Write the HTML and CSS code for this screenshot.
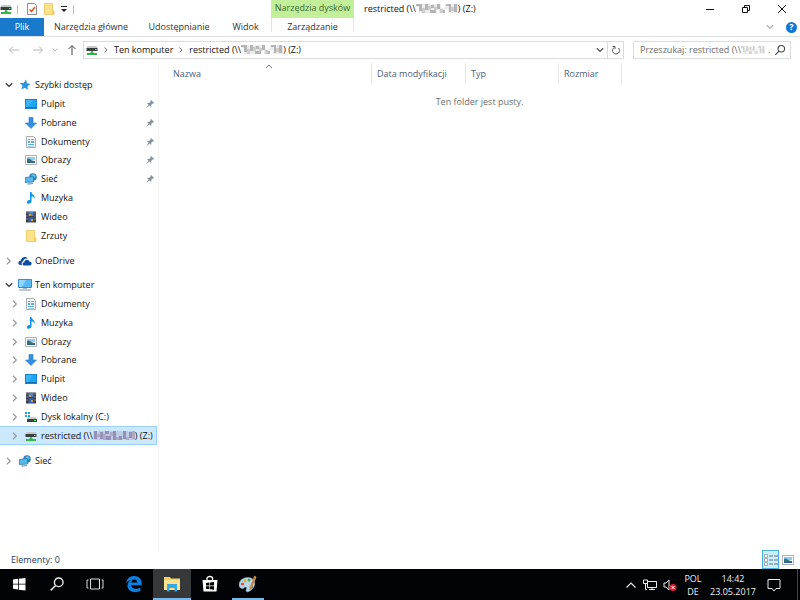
FILE: index.html
```
<!DOCTYPE html>
<html lang="pl">
<head>
<meta charset="utf-8">
<title>restricted (Z:)</title>
<link rel="stylesheet" href="styles.css">
</head>
<body>
<svg class="defs" aria-hidden="true">
  <symbol id="netdrive" viewBox="0 0 12 12"><path d="M1.5 2h9l1 2H.5z" fill="#c4c8c8"/><path d="M.5 4h11v3H.5z" fill="#384040"/><path d="M9 5h1.5v1H9z" fill="#5f6"/><path d="M5 7h2v2H5z" fill="#58b860"/><path d="M1 9h3l1-1h2l1 1h3v2H1z" fill="#35b44a"/></symbol>
  <symbol id="star" viewBox="0 0 12 12"><path d="M7 .5l1 3.8 3.500.8-3 2.100.3 3.800-3-2.200-3.500 1.700 1.200-3.700L.8 4.100l3.800-.2z" fill="#2b94e0"/></symbol>
  <symbol id="desktop" viewBox="0 0 12 12"><path d="M0 1h12v10H0z" fill="#1783cb"/><path d="M1 2h10v7H1z" fill="#1fa5f5"/><path d="M1 2h7L3 9H1z" fill="#3bb4fa"/><path d="M1 9h10v1H1z" fill="#1473b5"/></symbol>
  <symbol id="download" viewBox="0 0 12 12"><path d="M4 .5h4V6h3.500L6 11.500.5 6H4z" fill="#3290e2" stroke="#2878c6" stroke-width=".6"/></symbol>
  <symbol id="doc" viewBox="0 0 12 12"><path d="M1.500.5h7l2 2v9h-9z" fill="#f5f8fa" stroke="#a3adb3"/><path d="M3 5h2v2H3zM6 3h3v1H6zM6 5h3v2H6zM3 8h6v1H3zM3 10h6v.6H3zM3 3h2v1H3z" fill="#5babd8"/></symbol>
  <symbol id="picture" viewBox="0 0 12 12"><path d="M.5 1.500h11v9H.5z" fill="#fff" stroke="#aab2b8"/><path d="M2 3h8v3H2z" fill="#8ccbf2"/><path d="M2 5l2-.5L7 6.500 10 7v2H2z" fill="#367079"/><path d="M2 8h8v1H2z" fill="#2d5d8a"/></symbol>
  <symbol id="network" viewBox="0 0 12 12"><circle cx="8" cy="4" r="3.800" fill="#2d83b8"/><path d="M6 2l3-1 2 2-2 2z" fill="#5fc0e6"/><path d="M.5 4.500l8-1v5.500l-8 .5z" fill="#53b9ee" stroke="#2f7ca7" stroke-width=".8"/><path d="M2 10.500l6-.5v1l-5 .7z" fill="#7e98a8"/></symbol>
  <symbol id="music" viewBox="0 0 12 12"><path d="M5 0h1.500c0 2.500 4 3 3 7-.5-2-1.500-2.500-3-2.500V9c0 3-4.500 3.800-4.500 1.200C2 8.500 3.500 7.800 5 8z" fill="#0b94ee"/></symbol>
  <symbol id="video" viewBox="0 0 12 12"><path d="M1 .5h10v11H1z" fill="#3b4047"/><path d="M3.500 1h5v4h-5z" fill="#4c82c8"/><path d="M3.500 6h5v5h-5z" fill="#355ea8"/><path d="M4 3h2v2H4zM6 8h2v2H6z" fill="#d99a35"/><path d="M1.500 1.500h1v1h-1zm0 3h1v1h-1zm0 3h1v1h-1zm8-6h1v1h-1zm0 3h1v1h-1zm0 3h1v1h-1z" fill="#bcc2c8"/></symbol>
  <symbol id="folder" viewBox="0 0 12 12"><path d="M1.500.5h8v7h1.500v4H1.500z" fill="#fce18a" stroke="#ecc75d" stroke-width=".8"/><path d="M9 8h2v3.500H9z" fill="#f2cd5e"/></symbol>
  <symbol id="onedrive" viewBox="0 0 14 12"><path d="M1 9.500C-.5 8 .8 5.500 2.800 5.800 3 2 8 .5 9.700 3.500 6.500 3 5.500 5 5 6.500 3.500 7 3.200 8.500 4 10H2z" fill="#0c4da2"/><path d="M5.500 10.500C3.800 9.500 4.500 7.300 6.200 7.200 6.500 4 10.800 3.800 11.300 6.600c2.700-.2 3.200 3.400.7 3.900z" fill="#0c4da2"/></symbol>
  <symbol id="computer" viewBox="0 0 14 12"><path d="M.5.5h13v8H.5z" fill="#57b8f4" stroke="#348fc9"/><path d="M1 1h7L4 8H1z" fill="#91d5fb"/><path d="M5 9h4v1H5z" fill="#a6b8c4"/><path d="M1 10.500h12v1H1z" fill="#6b92ad"/></symbol>
  <symbol id="drive" viewBox="0 0 12 12"><path d="M0 1h2v2H0zm3 0h2v2H3zM0 4h2v2H0zm3 0h2v2H3z" fill="#18a4e8"/><path d="M3 6h8l1 2H2z" fill="#c6caca"/><path d="M2 8h10v3H2z" fill="#394044"/><path d="M9 9h2v1H9z" fill="#6f7"/></symbol>
  <symbol id="pin" viewBox="0 0 10 10"><path d="M5.800.8L9.200 4l-1 .5-1 .2-1 1.400.1 2L4.500 6.500 1 9.300 3.600 5.700 2 4l2-.1L5.400 2.800z" fill="#86929d"/></symbol>
  <symbol id="right" viewBox="0 0 8 8"><path d="M2 .8L5.300 4 2 7.200" fill="none" stroke="currentColor" stroke-width="1.200"/></symbol>
  <symbol id="down" viewBox="0 0 8 8"><path d="M.8 2.200L4 5.400l3.200-3.200" fill="none" stroke="currentColor" stroke-width="1.300"/></symbol>
  <symbol id="up" viewBox="0 0 8 8"><path d="M1 5l3-3 3 3" fill="none" stroke="currentColor"/></symbol>
  <symbol id="larrow" viewBox="0 0 12 12"><path d="M11 6H2M5 2.500L1.500 6 5 9.500" fill="none" stroke="currentColor"/></symbol>
  <symbol id="lens" viewBox="0 0 14 14"><circle cx="8.500" cy="5.500" r="3.800" fill="none" stroke="currentColor" stroke-width="1.200"/><path d="M5.800 8.300L1.500 12.600" stroke="currentColor" stroke-width="1.300"/></symbol>
  <symbol id="mask" viewBox="0 0 42 9" preserveAspectRatio="none"><path d="M0 0h42v9H0z" fill="#ececec"/><path d="M0 0h6v2H0zM3 2h3v5H3zM9 0h3v6H9zM15 1h3v3h-3zM14 6h6v3h-6zM21 0h3v5h-3zM26 6h4v3h-4zM30 0h5v2h-5zM33 2h2v6h-2zM38 0h3v8h-3z" fill="#b5b5b7"/><path d="M6 4h3v5H6zM12 2h3v4h-3zM18 3h3v3h-3zM24 5h3v4h-3zM35 3h3v4h-3z" fill="#cdcdce"/><path d="M0 3h3v6H0zM20 6h3v3h-3zM25 0h4v4h-4zM29 5h3v4h-3z" fill="#fff"/></symbol>
  <symbol id="maskblue" viewBox="0 0 42 9" preserveAspectRatio="none"><path d="M0 0h42v9H0z" fill="#bccde8"/><path d="M1 0h3v8H1zM7 1h3v7H7zM12 0h4v3h-4zM13 5h5v4h-5zM20 0h3v9h-3zM26 5h3v4h-3zM30 0h3v8h-3zM36 1h3v6h-3z" fill="#9690b8"/><path d="M4 3h3v3H4zM10 3h3v6h-3zM17 1h3v4h-3zM23 6h3v3h-3zM33 6h3v3h-3zM39 0h3v8h-3z" fill="#b0abc3"/></symbol>
</svg>

<header class="titlebar">
  <div class="quick">
    <svg class="ico"><use href="#netdrive"/></svg>
    <i class="bar"></i>
    <button class="props" aria-label="Właściwości"><svg class="ico" viewBox="0 0 12 12"><path d="M1.500.5h7l2 2v9h-9z" fill="#fff" stroke="#8c8c8c"/><path d="M3.500 6.500l2 2 3.500-4.500" fill="none" stroke="#e35420" stroke-width="1.500"/></svg></button>
    <button aria-label="Nowy folder"><svg class="ico"><use href="#folder"/></svg></button>
    <button aria-label="Dostosuj"><svg class="small" viewBox="0 0 8 8"><path d="M1 1.500h6" stroke="#222"/><path d="M1 4h6L4 7z" fill="#222"/></svg></button>
    <i class="bar"></i>
  </div>
  <div class="context">Narzędzia dysków</div>
  <h1 class="title">restricted (\\<svg class="mask"><use href="#mask"/></svg>) (Z:)</h1>
  <div class="winbtns">
    <button aria-label="Minimalizuj"><svg class="caption" viewBox="0 0 10 10"><path d="M1 5.500h8" stroke="#111"/></svg></button>
    <button aria-label="Przywróć"><svg class="caption" viewBox="0 0 10 10"><path d="M1.500 3.500h5v5h-5zM3.500 3V1.500h5v5H7" fill="none" stroke="#111"/></svg></button>
    <button aria-label="Zamknij"><svg class="caption" viewBox="0 0 10 10"><path d="M1 1l8 8M9 1L1 9" stroke="#111"/></svg></button>
  </div>
</header>

<nav class="ribbon">
  <button class="file">Plik</button>
  <button class="tab tab-home">Narzędzia główne</button>
  <button class="tab tab-share">Udostępnianie</button>
  <button class="tab tab-view">Widok</button>
  <button class="tab tab-manage">Zarządzanie</button>
  <div class="ribbon-end">
    <button class="pale" aria-label="Rozwiń wstążkę"><svg class="small"><use href="#down"/></svg></button>
    <button class="help" aria-label="Pomoc">?</button>
  </div>
</nav>

<div class="address-row">
  <div class="arrows">
    <button class="pale" aria-label="Wstecz"><svg class="ico"><use href="#larrow"/></svg></button>
    <button class="pale" aria-label="Dalej"><svg class="ico flip"><use href="#larrow"/></svg></button>
    <button class="pale recent" aria-label="Ostatnie"><svg class="tiny"><use href="#down"/></svg></button>
    <button class="dark" aria-label="W górę"><svg class="ico turn"><use href="#larrow"/></svg></button>
  </div>
  <div class="address">
    <svg class="ico"><use href="#netdrive"/></svg>
    <svg class="tiny"><use href="#right"/></svg>
    <a href="#">Ten komputer</a>
    <svg class="tiny"><use href="#right"/></svg>
    <a href="#">restricted (\\<svg class="mask"><use href="#mask"/></svg>) (Z:)</a>
    <button class="drop" aria-label="Poprzednie lokalizacje"><svg class="small"><use href="#down"/></svg></button>
    <button class="refresh" aria-label="Odśwież"><svg class="caption" viewBox="0 0 10 10"><path d="M7.500 3A3.500 3.500 0 1 1 3.200 2.500M1.500 1.500H4V4" fill="none" stroke="#555"/></svg></button>
  </div>
  <div class="search">
    <input type="text" aria-label="Przeszukaj" placeholder="Przeszukaj: restricted (\\">
    <svg class="mask mask-short"><use href="#mask"/></svg>
    <span class="dot">.</span>
    <button aria-label="Szukaj"><svg class="ico"><use href="#lens"/></svg></button>
  </div>
</div>

<main class="content">
  <nav class="tree">
    <ul class="group">
      <li class="root open"><button aria-label="Zwiń"><svg class="small"><use href="#down"/></svg></button><a href="#"><svg class="ico"><use href="#star"/></svg>Szybki dostęp</a></li>
      <li><a href="#"><svg class="ico"><use href="#desktop"/></svg>Pulpit</a><svg class="pin"><use href="#pin"/></svg></li>
      <li><a href="#"><svg class="ico"><use href="#download"/></svg>Pobrane</a><svg class="pin"><use href="#pin"/></svg></li>
      <li><a href="#"><svg class="ico"><use href="#doc"/></svg>Dokumenty</a><svg class="pin"><use href="#pin"/></svg></li>
      <li><a href="#"><svg class="ico"><use href="#picture"/></svg>Obrazy</a><svg class="pin"><use href="#pin"/></svg></li>
      <li><a href="#"><svg class="ico"><use href="#network"/></svg>Sieć</a><svg class="pin"><use href="#pin"/></svg></li>
      <li><a href="#"><svg class="ico"><use href="#music"/></svg>Muzyka</a></li>
      <li><a href="#"><svg class="ico"><use href="#video"/></svg>Wideo</a></li>
      <li><a href="#"><svg class="ico"><use href="#folder"/></svg>Zrzuty</a></li>
    </ul>
    <ul class="single">
      <li class="root"><button aria-label="Rozwiń"><svg class="small"><use href="#right"/></svg></button><a href="#"><svg class="ico wide"><use href="#onedrive"/></svg>OneDrive</a></li>
    </ul>
    <ul class="group">
      <li class="root open"><button aria-label="Zwiń"><svg class="small"><use href="#down"/></svg></button><a href="#"><svg class="ico wide"><use href="#computer"/></svg>Ten komputer</a></li>
      <li><button aria-label="Rozwiń"><svg class="small"><use href="#right"/></svg></button><a href="#"><svg class="ico"><use href="#doc"/></svg>Dokumenty</a></li>
      <li><button aria-label="Rozwiń"><svg class="small"><use href="#right"/></svg></button><a href="#"><svg class="ico"><use href="#music"/></svg>Muzyka</a></li>
      <li><button aria-label="Rozwiń"><svg class="small"><use href="#right"/></svg></button><a href="#"><svg class="ico"><use href="#picture"/></svg>Obrazy</a></li>
      <li><button aria-label="Rozwiń"><svg class="small"><use href="#right"/></svg></button><a href="#"><svg class="ico"><use href="#download"/></svg>Pobrane</a></li>
      <li><button aria-label="Rozwiń"><svg class="small"><use href="#right"/></svg></button><a href="#"><svg class="ico"><use href="#desktop"/></svg>Pulpit</a></li>
      <li><button aria-label="Rozwiń"><svg class="small"><use href="#right"/></svg></button><a href="#"><svg class="ico"><use href="#video"/></svg>Wideo</a></li>
      <li><button aria-label="Rozwiń"><svg class="small"><use href="#right"/></svg></button><a href="#"><svg class="ico"><use href="#drive"/></svg>Dysk lokalny (C:)</a></li>
      <li class="selected"><button aria-label="Rozwiń"><svg class="small"><use href="#right"/></svg></button><a href="#"><svg class="ico"><use href="#netdrive"/></svg><span>restricted (\\<svg class="mask"><use href="#maskblue"/></svg>) (Z:)</span></a></li>
    </ul>
    <ul class="single">
      <li class="root"><button aria-label="Rozwiń"><svg class="small"><use href="#right"/></svg></button><a href="#"><svg class="ico wide"><use href="#network"/></svg>Sieć</a></li>
    </ul>
  </nav>
  <section class="files">
    <table>
      <thead><tr>
        <th class="c-name">Nazwa<svg class="sort"><use href="#up"/></svg></th>
        <th class="c-date">Data modyfikacji</th>
        <th class="c-type">Typ</th>
        <th class="c-size">Rozmiar</th>
        <th class="c-rest"></th>
      </tr></thead>
      <tbody><tr><td colspan="5">Ten folder jest pusty.</td></tr></tbody>
    </table>
  </section>
</main>

<footer class="status">
  <span>Elementy: 0</span>
  <div class="views">
    <button class="on" aria-label="Szczegóły"><svg class="view" viewBox="0 0 14 12"><path d="M.5.5h3v3h-3zm0 4h3v3h-3zm0 4h3v3h-3z" fill="#fff" stroke="#8f9fa8" stroke-width=".8"/><path d="M5 2h4m1 0h4M5 6h4m1 0h4M5 10h4m1 0h4" stroke="#61757f"/></svg></button>
    <button aria-label="Duże ikony"><svg class="ico"><use href="#picture"/></svg></button>
  </div>
</footer>

<footer class="taskbar">
  <button aria-label="Start"><svg class="app" viewBox="0 0 18 18"><path d="M3 4.500l5-.7v5H3zM8.800 3.700L15.500 3v5.800H8.800zM3 9.500h5v5l-5-.7zM8.800 9.500h6.700v6l-6.700-.8z" fill="#fff"/></svg></button>
  <button aria-label="Szukaj"><svg class="lens"><use href="#lens"/></svg></button>
  <button aria-label="Widok zadań"><svg class="app" viewBox="0 0 18 18"><path d="M4.500 4h9v10h-9zM2.500 5H1v8h1.500M15.500 5H17v8h-1.500" fill="none" stroke="#ddd"/></svg></button>
  <button aria-label="Edge" class="edge"><svg class="app" viewBox="0 0 18 18"><path d="M1 8.300C1.800 3.500 5 1 9.200 1c5 0 7.500 3.400 7.500 7v2.200H6.200c.2 2.600 2.200 3.500 4.600 3.500 1.700 0 3.200-.4 4.600-1.300v3.500C13.900 16.700 12 17 10 17c-4.700 0-7.500-2.600-7.500-6.300 0-2.600 1.300-4.500 3.800-5.700C3.800 5.300 2.100 6.500 1 8.300zm5.300-.9h5.900c0-2-1-3-2.900-3-1.800 0-2.800 1.200-3 3z" fill="#0c7fe0"/></svg></button>
  <button aria-label="Eksplorator" class="active"><svg class="app" viewBox="0 0 18 18"><path d="M1 2h6l1 1.500h9V15H1z" fill="#f5cf65"/><path d="M1 5h16v10H1z" fill="#fde391"/><path d="M4 9h10v7.500h-2.500V13h-5v3.500H4z" fill="#35a9e3"/></svg></button>
  <button aria-label="Sklep"><svg class="app" viewBox="0 0 18 18"><path d="M1.500 5h15l-1 11.500h-13z" fill="#fff"/><path d="M6 5V3.500C6 .8 11.500.8 11.500 3.500V5" fill="none" stroke="#fff" stroke-width="1.300"/><path d="M5 8l3.400-.5v3H5zm4-.6l4-.5v3.600H9zM5 11.200h3.400v3L5 13.700zm4 0h4v3.600l-4-.5z" fill="#000"/></svg></button>
  <button aria-label="Paint" class="running"><svg class="app" viewBox="0 0 18 18"><path d="M0 10C0 5 5 2 10 2.500c5 .5 7 5.500 5 9-2 4-6 6-7.500 5-1.500-1.500 1-3-.5-4.500-2-.5-2 2-4 1.500C1 13 0 12 0 10z" fill="#b8d8e8" stroke="#7ba9c0" stroke-width=".6"/><circle cx="3.500" cy="9" r="1.600" fill="#db4938"/><circle cx="6" cy="5.800" r="1.500" fill="#e9a825"/><circle cx="10" cy="5" r="1.500" fill="#4ca64d"/><circle cx="12.500" cy="12" r="1.500" fill="#397ccc"/><path d="M15.500.5l2 1.500-5 12-2 1.500 0-3z" fill="#cf8746"/></svg></button>
  <div class="tray">
    <svg class="app-s" viewBox="0 0 12 12"><path d="M1.500 8.500L6 4l4.500 4.500" fill="none" stroke="#eee" stroke-width="1.200"/></svg>
    <svg class="net" viewBox="0 0 14 12"><path d="M4.500 2.500h9v6h-9zM9 8.500v2M6 10.500h6M2.500 4v6.500H4" fill="none" stroke="#eee"/><path d="M.5 1h4v3.500h-4z" fill="#000" stroke="#eee"/></svg>
    <svg class="net" viewBox="0 0 14 12"><path d="M1 4h2l3-3v10L3 8H1z" fill="none" stroke="#eee"/><circle cx="10" cy="8.500" r="3.500" fill="#e21c2d"/><path d="M8.500 7l3 3m0-3l-3 3" stroke="#fff"/></svg>
    <div class="lang">POL<br>DE</div>
    <time class="clock">14:42<br>23.05.2017</time>
    <button aria-label="Centrum akcji"><svg class="note" viewBox="0 0 14 14"><path d="M1 1.500h12v9H9l-2 2.500-2-2.500H1z" fill="none" stroke="#eee"/></svg></button>
    <i class="peek"></i>
  </div>
</footer>
</body>
</html>
```
FILE: styles.css
```
* { box-sizing: border-box; }
body { margin: 0; min-height: 100vh; display: flex; flex-direction: column; background: #fff; color: #111; font: 9px/12px "Open Sans", "Noto Sans", sans-serif; }
button { border: 0; padding: 0; margin: 0; background: none; font: inherit; color: inherit; display: flex; align-items: center; justify-content: center; flex: none; }
a { color: inherit; text-decoration: none; }
svg { flex: none; }
ul { list-style: none; margin: 0; padding: 0; }
.defs { position: absolute; width: 0; height: 0; }
.ico { width: 12px; height: 12px; }
.wide { width: 14px; }
.small { width: 8px; height: 8px; }
.tiny { width: 6px; height: 6px; color: #555; }
.caption { width: 10px; height: 10px; }
.mask { width: 42px; height: 9px; vertical-align: -1px; }
.flip { transform: rotate(180deg); }
.turn { transform: rotate(90deg); }
.pale, .pale svg { color: #b4b4b4; }
.dark { color: #444; }

.titlebar { display: flex; height: 18px; }
.quick { width: 271px; display: flex; align-items: center; gap: 5px; }
.quick .props { margin-left: 3px; }
.bar { width: 1px; height: 9px; background: #bbb; }
.context { width: 83px; background: #c3ef9b; color: #3d6b2c; text-align: center; line-height: 16px; }
.title { flex: 1; margin: 0; padding-left: 10px; font-size: 9px; font-weight: 400; line-height: 18px; }
.winbtns { display: flex; align-items: center; }
.winbtns button { width: 36px; height: 16px; }

.ribbon { display: flex; height: 19px; border-bottom: 1px solid #dedfe0; color: #333; }
.ribbon button { height: 18px; }
.ribbon .file { width: 44px; background: #1979ca; color: #fff; }
.tab-home { width: 94px; }
.tab-share { width: 82px; }
.tab-view { width: 51px; }
.ribbon .tab-manage { width: 83px; height: 14px; padding-top: 4px; border: solid #e3e3e3; border-width: 0 1px; }
.ribbon-end { flex: 1; display: flex; justify-content: flex-end; align-items: center; gap: 12px; padding-right: 3px; }
.ribbon .help { width: 11px; height: 11px; border-radius: 50%; background: #0f78d4; color: #fff; font-weight: 700; }

.address-row { display: flex; align-items: center; height: 25px; padding-right: 9px; margin-bottom: 1px; }
.arrows { width: 83px; padding-left: 8px; display: flex; align-items: center; gap: 12px; }
.arrows .recent { margin: 0 -4px; }
.address { flex: 1; height: 18px; border: 1px solid #dcdcdc; display: flex; align-items: center; gap: 5px; padding-left: 2px; }
.address .drop { margin-left: auto; margin-right: -2px; color: #555; }
.refresh { width: 16px; height: 16px; border-left: 1px solid #dcdcdc; }
.search { width: 158px; height: 18px; margin-left: 9px; border: 1px solid #dcdcdc; display: flex; align-items: center; padding: 0 4px 0 6px; color: #666; }
.search input { width: 101px; border: 0; padding: 0; font: inherit; background: none; outline: 0; }
.search input::placeholder { color: #6d6d6d; opacity: 1; }
.search .mask { width: 24px; height: 8px; opacity: .6; }
.search .dot { flex: 1; padding-left: 3px; }
.search button { color: #444; }

.content { flex: 1; display: flex; }
.tree { width: 159px; padding-top: 13px; border-right: 1px solid #f3f3f3; display: flex; flex-direction: column; gap: 6px; }
.group { display: grid; grid-template-rows: repeat(9, 1fr); height: 169px; }
.single { height: 19px; display: grid; }
.tree li { display: flex; align-items: center; padding-left: 25px; width: 157px; border: 1px solid transparent; border-left: 0; }
.tree li.root { padding-left: 5px; }
.tree li > button { width: 8px; margin: 0 6px 0 -14px; color: #999; }
.tree li.root > button { margin: 0 6px 0 0; }
.tree .open > button { color: #333; }
.tree a { display: flex; align-items: center; gap: 4px; flex: 1; white-space: nowrap; }
.tree .wide { margin: 0 -1px; }
.pin { width: 10px; height: 10px; margin-right: 1px; }
.tree .selected { background: #cce8ff; border-color: #99d1ff; }

.files { flex: 1; min-width: 0; }
table { width: 100%; table-layout: fixed; border-collapse: separate; border-spacing: 0; }
th { height: 21px; padding: 0 0 0 5px; font-weight: 400; text-align: left; color: #4c607a; border-right: 1px solid #e5e5e5; position: relative; }
.c-name { width: 213px; padding-left: 14px; }
.c-date { width: 94px; }
.c-type { width: 93px; }
.c-size { width: 63px; }
.c-rest { border: 0; }
.sort { position: absolute; top: 0; left: 50%; width: 8px; height: 8px; color: #777; }
td { padding: 12px 0; text-align: center; color: #6d6d6d; }

.status { height: 19px; display: flex; align-items: center; justify-content: space-between; padding-left: 11px; color: #1e395b; }
.views { display: flex; padding-right: 4px; }
.views button { width: 17px; height: 19px; border: 1px solid transparent; }
.views .on { background: #cdeefb; border-color: #48b2dc; }
.view { width: 14px; height: 12px; }

.taskbar { height: 31px; background: #020305; color: #eee; display: flex; }
.taskbar > button { width: 38px; height: 31px; border-bottom: 2px solid transparent; }
.app { width: 18px; height: 18px; }
.lens { width: 16px; height: 16px; color: #eee; }
.taskbar .edge { width: 39px; }
.taskbar .active { background: #36383a; border-bottom-color: #76b9ed; }
.taskbar .running { background: linear-gradient(#76b9ed, #76b9ed) center 100% / 32px 2px no-repeat border-box; }
.tray { flex: 1; display: flex; align-items: center; justify-content: flex-end; text-align: center; gap: 6px; }
.app-s { width: 12px; height: 12px; }
.net { width: 14px; height: 12px; }
.lang, .clock { line-height: 13px; }
.lang { width: 20px; }
.clock { width: 46px; margin-left: 1px; }
.note { width: 14px; height: 14px; }
.tray button { margin: 0 12px 0 5px; }
.peek { width: 3px; height: 31px; border-left: 1px solid #444; margin-left: -2px; }
```
